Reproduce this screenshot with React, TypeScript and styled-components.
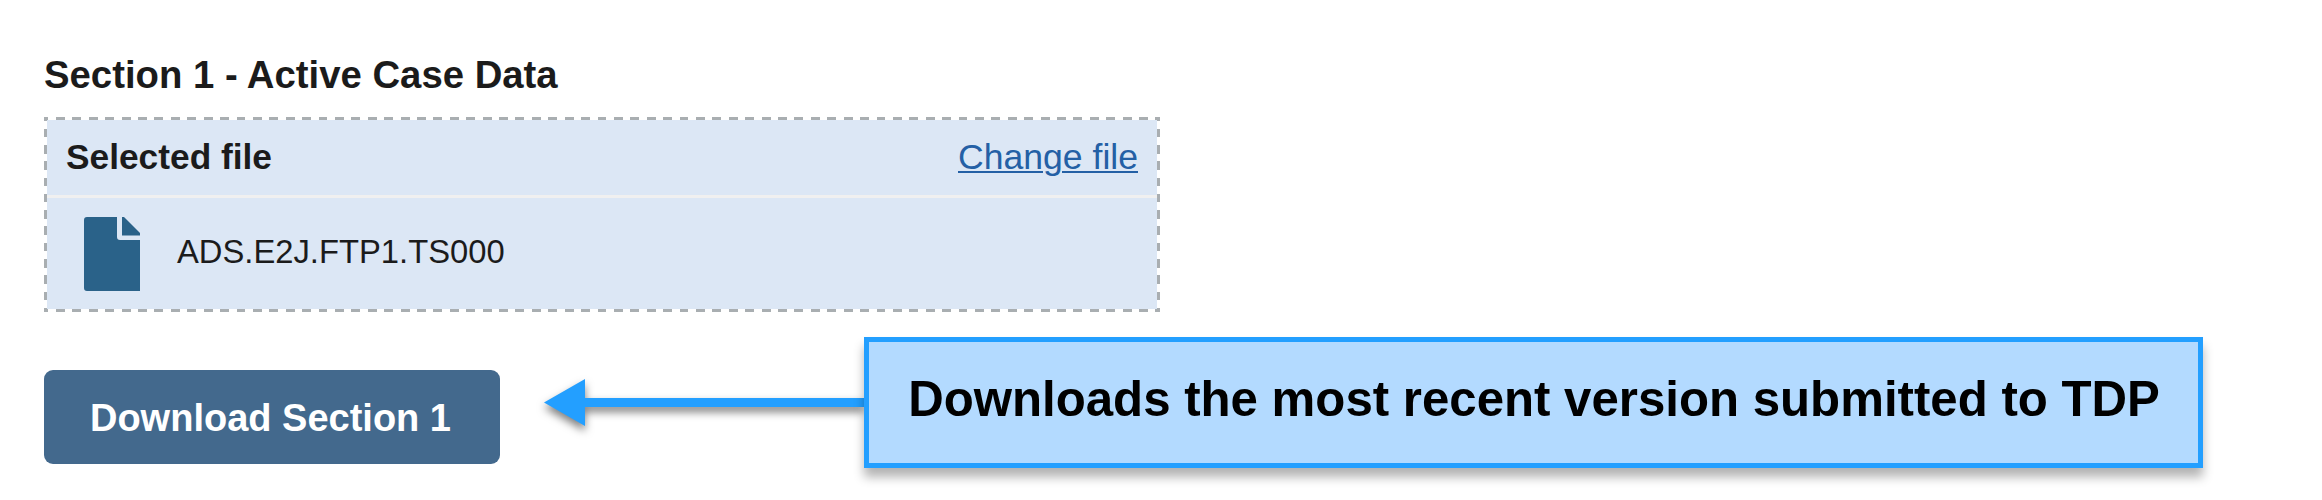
import React from "react";
import styled, { createGlobalStyle } from "styled-components";

const GlobalStyle = createGlobalStyle`
  * { box-sizing: border-box; }
  body { margin: 0; background: #fff; }
`;

const Page = styled.main`
  width: 2322px;
  height: 500px;
  overflow: hidden;
  padding: 50px 0 0 44px;
  background: #fff;
  color: #1b1b1b;
  font-family: "Liberation Sans", Arial, sans-serif;
`;

const Heading = styled.h2`
  margin: 0;
  height: 67px;
  font-size: 38.3px;
  line-height: 50px;
  font-weight: 700;
  white-space: nowrap;
`;

const dash = "#a9aeb1";

const FileBox = styled.section`
  width: 1116px;
  height: 195px;
  padding: 3px;
  background:
    linear-gradient(#dce7f5, #dce7f5) 3px 3px / 1110px 189px no-repeat,
    repeating-linear-gradient(90deg, ${dash} 0 4.5px, transparent 4.5px 12px, ${dash} 12px 16.41px) 0 0 / 100% 3px no-repeat,
    repeating-linear-gradient(90deg, ${dash} 0 4.5px, transparent 4.5px 12px, ${dash} 12px 16.41px) 0 100% / 100% 3px no-repeat,
    repeating-linear-gradient(180deg, ${dash} 0 4px, transparent 4px 11.7px, ${dash} 11.7px 16.3px) 0 0 / 3px 100% no-repeat,
    repeating-linear-gradient(180deg, ${dash} 0 4px, transparent 4px 11.7px, ${dash} 11.7px 16.3px) 100% 0 / 3px 100% no-repeat;
`;

const FileHeader = styled.header`
  display: flex;
  justify-content: space-between;
  height: 78px;
  padding: 12px 19px 0 19px;
  border-bottom: 3px solid #f0f0f0;
  font-size: 35.3px;
  line-height: 50px;
  white-space: nowrap;
`;

const ChangeLink = styled.a`
  color: #2460a5;
  font-size: 35.6px;
  text-decoration: underline;
  text-decoration-thickness: 2px;
  text-underline-offset: 2px;
`;

const FileRow = styled.div`
  display: flex;
  align-items: center;
  height: 111px;
  padding-left: 37px;
  gap: 37px;
  font-size: 32.75px;
`;

const FileName = styled.span`
  padding-bottom: 4px;
`;

const FileIcon = styled.svg`
  width: 56px;
  height: 74px;
  fill: #2a6289;
`;

const Actions = styled.div`
  display: flex;
  align-items: flex-start;
  margin-top: 25px;
`;

const DownloadButton = styled.button`
  width: 456px;
  height: 94px;
  margin: 33px 0 0;
  padding: 2px 3px 0 0;
  border: 0;
  border-radius: 9px;
  background: #43698d;
  color: #fff;
  font: 700 38px/1 "Liberation Sans", Arial, sans-serif;
  white-space: nowrap;
`;

const Arrow = styled.svg`
  width: 320px;
  height: 80px;
  margin: 26px 0 0 44px;
  overflow: visible;
  fill: #239fff;
  filter: drop-shadow(0 5px 4px rgba(0, 0, 0, 0.5));
`;

const Callout = styled.aside`
  position: relative;
  display: flex;
  justify-content: center;
  width: 1339px;
  height: 131px;
  padding-left: 1px;
  border: 5px solid #239fff;
  background: #b3daff;
  box-shadow: 0 9px 10px rgba(0, 0, 0, 0.3);
  color: #000;
  font-size: 49.2px;
  line-height: 114px;
  font-weight: 700;
  white-space: nowrap;
`;

export default function App() {
  return (
    <>
      <GlobalStyle />
      <Page>
        <Heading>Section 1 - Active Case Data</Heading>
        <FileBox>
          <FileHeader>
            <strong>Selected file</strong>
            <ChangeLink>Change file</ChangeLink>
          </FileHeader>
          <FileRow>
            <FileIcon viewBox="0 0 56 74" aria-hidden="true">
              <path d="M3 0H33V20Q33 23 36 23H56V74H3Q0 74 0 71V3Q0 0 3 0Z" />
              <path d="M38 0H40L56 16V18.5H38Z" />
            </FileIcon>
            <FileName>ADS.E2J.FTP1.TS000</FileName>
          </FileRow>
        </FileBox>
        <Actions>
          <DownloadButton>Download Section 1</DownloadButton>
          <Arrow viewBox="0 0 320 80" aria-hidden="true">
            <path d="M0 39.5L41 16V35H320V44H41V63Z" />
          </Arrow>
          <Callout>Downloads the most recent version submitted to TDP</Callout>
        </Actions>
      </Page>
    </>
  );
}
